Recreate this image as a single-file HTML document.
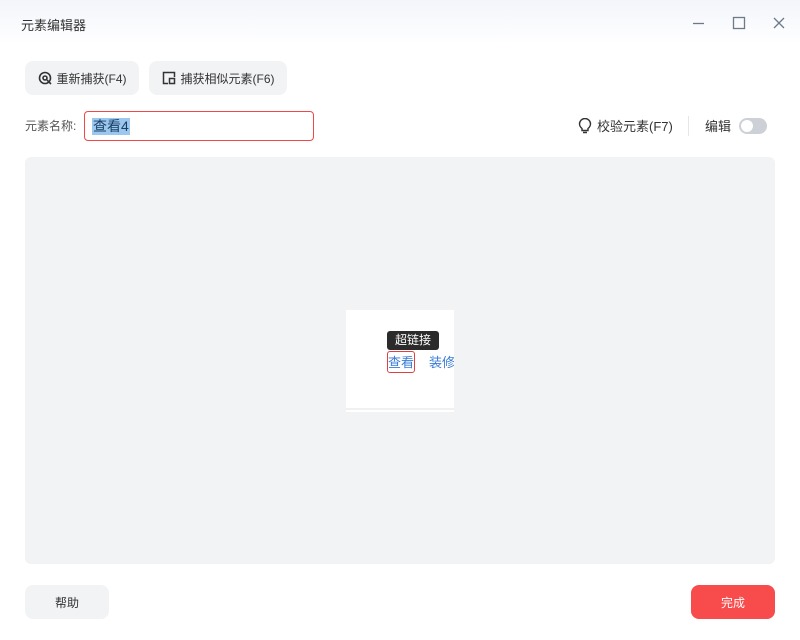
<!DOCTYPE html>
<html><head><meta charset="utf-8"><style>
*{margin:0;padding:0;box-sizing:border-box}
body{width:800px;height:640px;background:#fff;font-family:"Liberation Sans","Noto Sans CJK SC",sans-serif;position:relative;overflow:hidden;color:#333}
.abs{position:absolute}
.title{left:21px;top:15px;font-size:13px;color:#333}
.hdr{left:0;top:0;width:800px;height:45px;background:linear-gradient(#f3f5fb,#fff)}
.btn{background:#f2f3f5;border-radius:8px;height:34px;font-size:12px;display:flex;align-items:center;justify-content:center;gap:5px;color:#333}
.inp{left:84px;top:111px;width:230px;height:30px;border:1px solid #f04848;border-radius:4px}
.sel{position:absolute;left:7px;top:6px;background:#9cc8ef;font-size:14px;line-height:17px;color:#1a3f66;padding:0 1px}
.canvas{left:25px;top:157px;width:750px;height:407px;background:#f2f3f5;border-radius:6px}
</style></head><body>
<div class="abs hdr"></div>
<div class="abs title">元素编辑器</div>
<svg class="abs" style="left:690px;top:16px" width="100" height="16" fill="none" stroke="#6e7a8a" stroke-width="1.3">
<line x1="3" y1="7.5" x2="14" y2="7.5"/><rect x="43.5" y="1.5" width="11" height="11"/><path d="M84 2l10 10M94 2l-10 10"/></svg>
<div class="abs btn" style="left:25px;top:61px;width:114px"><svg width="14" height="14" fill="none" stroke="#333" stroke-width="1.6"><circle cx="7" cy="7" r="5.5"/><circle cx="7" cy="7" r="2"/><path d="M9 9l4 4" /></svg>重新捕获(F4)</div>
<div class="abs btn" style="left:149px;top:61px;width:138px"><svg width="14" height="14" fill="none" stroke="#333" stroke-width="1.5"><path d="M12.5 6V1.5h-11v11H6"/><rect x="7.5" y="7.5" width="5" height="5"/></svg>捕获相似元素(F6)</div>
<div class="abs" style="left:25px;top:117px;font-size:12px;color:#555">元素名称:</div>
<div class="abs inp"><span class="sel">查看4</span></div>
<svg class="abs" style="left:578px;top:118px" width="14" height="16" fill="none" stroke="#333" stroke-width="1.4"><path d="M4 10.5C2.5 9.3 1.5 7.8 1.5 6a5.5 5.5 0 0111 0c0 1.8-1 3.3-2.5 4.5v2h-6z M5 14.5h4"/></svg>
<div class="abs" style="left:597px;top:116px;font-size:13px;color:#333">校验元素(F7)</div>
<div class="abs" style="left:688px;top:116px;width:1px;height:20px;background:#e5e6ea"></div>
<div class="abs" style="left:705px;top:116px;font-size:13px;color:#333">编辑</div>
<div class="abs" style="left:739px;top:118px;width:28px;height:16px;border-radius:8px;background:#cdd0d6"><div style="position:absolute;left:2px;top:2px;width:12px;height:12px;border-radius:6px;background:#fff"></div></div>
<div class="abs canvas"></div>
<div class="abs" style="left:346px;top:310px;width:108px;height:102px;background:#fff"></div>
<div class="abs" style="left:346px;top:408px;width:108px;height:2px;background:#f0f0f0"></div>
<div class="abs" style="left:387px;top:331px;width:52px;height:19px;background:#2b2b2b;border-radius:3px;color:#fff;font-size:12px;line-height:19px;text-align:center">超链接</div>
<div class="abs" style="left:387px;top:351px;width:28px;height:22px;border:1px solid #e04040;border-radius:3px"></div>
<div class="abs" style="left:388px;top:352px;font-size:13px;color:#3a7bd5">查看</div>
<div class="abs" style="left:429px;top:352px;font-size:13px;color:#3a7bd5;width:25px;overflow:hidden;white-space:nowrap">装修</div>
<div class="abs btn" style="left:25px;top:585px;width:84px;height:34px">帮助</div>
<div class="abs btn" style="left:691px;top:585px;width:84px;height:34px;background:#f84b4b;color:#fff">完成</div>
</body></html>
